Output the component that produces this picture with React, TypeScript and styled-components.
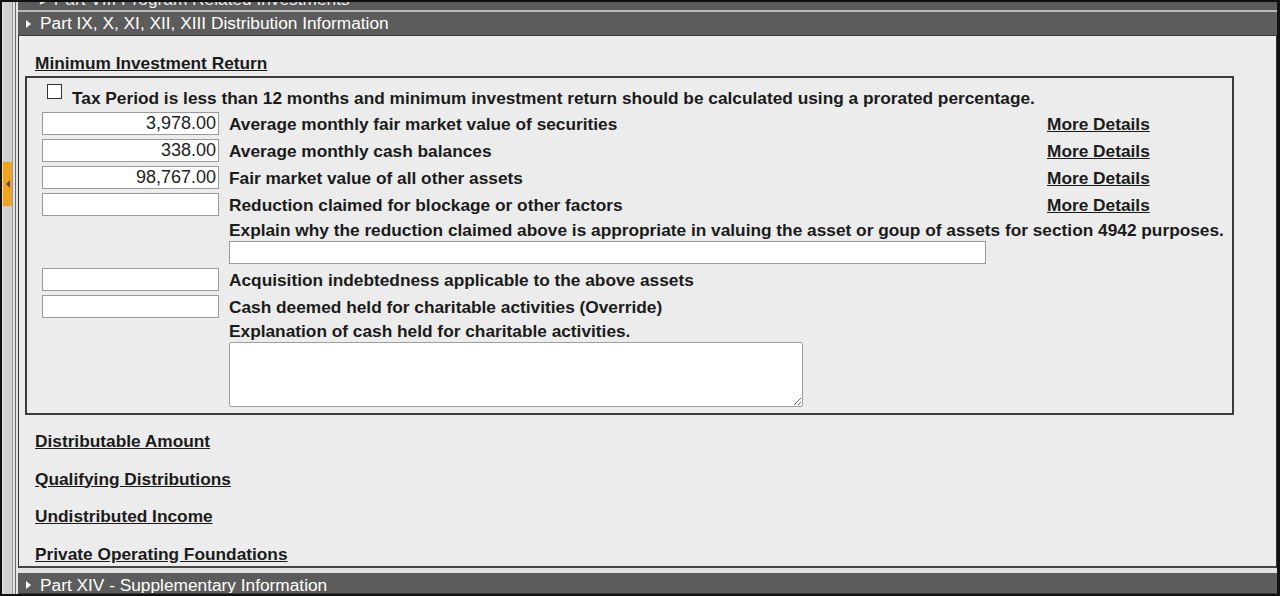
import React from "react";
import styled, { createGlobalStyle } from "styled-components";

const Global = createGlobalStyle`
  html, body { margin: 0; padding: 0; }
  body {
    width: 1280px;
    height: 596px;
    overflow: hidden;
    background: #ececec;
    font-family: "Liberation Sans", Arial, sans-serif;
  }
  * { box-sizing: border-box; }
`;

const Frame = styled.div`
  width: 1280px;
  height: 596px;
  border: 2px solid #111;
  border-right-width: 3px;
  display: flex;
  background: #ececec;
  overflow: hidden;
`;

/* Splitter gutter on the left edge */
const Gutter = styled.div`
  width: 16px;
  flex: none;
  display: flex;
  flex-direction: column;
  background: linear-gradient(
    to right,
    #dcdcdc 0 2px,
    #cfcfcf 2px 10px,
    #9a9a9a 10px 11px,
    #e2e2e2 11px 13px,
    #6a6a6a 13px 14px,
    #e4e4e4 14px 16px
  );
  padding-top: 160px;
`;

const Handle = styled.div`
  width: 9px;
  height: 44px;
  margin-left: 1px;
  background: #f2a31d;
  display: flex;
  align-items: center;
  justify-content: center;
  &::before {
    content: "";
    border-top: 4px solid transparent;
    border-bottom: 4px solid transparent;
    border-right: 4px solid #555;
  }
`;

const Main = styled.div`
  flex: 1;
  display: flex;
  flex-direction: column;
  min-width: 0;
`;

const CutBar = styled.div`
  height: 8px;
  flex: none;
  background: #5b5b5b;
  overflow: hidden;
  color: #eee;
  font-size: 17.3px;
  line-height: 20px;
  padding-left: 22px;
  white-space: nowrap;
  & > span { display: block; margin-top: -13px; }
`;

const Rule = styled.div<{ $tone: string; $h: number }>`
  height: ${(p) => p.$h}px;
  background: ${(p) => p.$tone};
  flex: none;
`;

const SectionBar = styled.div<{ $h: number; $shift?: number }>`
  height: ${(p) => p.$h}px;
  flex: none;
  background: #5c5c5c;
  border-bottom: 1px solid #3a3a3a;
  color: #fff;
  font-size: 17.3px;
  display: flex;
  align-items: center;
  gap: 9px;
  padding-left: 8px;
  padding-top: ${(p) => p.$shift ?? 0}px;
  white-space: nowrap;
  overflow: hidden;
`;

const Caret = styled.span`
  width: 0;
  height: 0;
  border-top: 4px solid transparent;
  border-bottom: 4px solid transparent;
  border-left: 5px solid #fff;
  flex: none;
`;

const Panel = styled.div`
  flex: 1;
  background: #ececec;
  border-left: 1px solid #333;
  border-right: 1px solid #333;
  border-bottom: 2px solid #444;
  padding: 17px 42px 0 6px;
  display: flex;
  flex-direction: column;
  color: #1b1b1b;
  font-size: 17.3px;
  min-height: 0;
  overflow: hidden;
`;

const Heading = styled.a`
  font-weight: bold;
  text-decoration: underline;
  color: #1b1b1b;
  margin-left: 10px;
  line-height: 20px;
  align-self: flex-start;
  cursor: pointer;
`;

const Box = styled.div`
  margin-top: 3px;
  border: 2px solid #3c3c3c;
  padding: 6px 0 6px 15px;
  display: grid;
  grid-template-columns: 177px 818px auto;
  column-gap: 10px;
  align-items: center;
`;

const CheckRow = styled.label`
  grid-column: 1 / -1;
  display: flex;
  align-items: flex-start;
  gap: 10px;
  font-weight: bold;
  padding-left: 5px;
  margin-bottom: 2px;
`;

const Check = styled.input`
  appearance: none;
  width: 15px;
  height: 15px;
  margin: 0;
  border: 1px solid #333;
  background: #fff;
  flex: none;
`;

const CheckText = styled.span`
  margin-top: 4px;
  line-height: 20px;
  white-space: nowrap;
`;

const Amount = styled.input`
  width: 177px;
  height: 23px;
  margin: 2px 0;
  border: 1px solid #9a9a9a;
  background: #fff;
  font: 18px "Liberation Sans", Arial, sans-serif;
  color: #222;
  text-align: right;
  padding: 0 2px;
  outline: none;
`;

const Label = styled.span<{ $span?: boolean }>`
  font-weight: bold;
  line-height: 20px;
  white-space: nowrap;
  grid-column: ${(p) => (p.$span ? "2 / -1" : "auto")};
`;

const Detail = styled.a`
  font-weight: bold;
  text-decoration: underline;
  color: #1b1b1b;
  margin-left: -10px;
  cursor: pointer;
  line-height: 20px;
`;

const Note = styled.span<{ $gap: number }>`
  grid-column: 2 / -1;
  font-weight: bold;
  line-height: 20px;
  margin-top: ${(p) => p.$gap}px;
  white-space: nowrap;
`;

const Wide = styled.input`
  grid-column: 2 / -1;
  width: 757px;
  height: 23px;
  margin: 1px 0 2px;
  border: 1px solid #9a9a9a;
  background: #fff;
  outline: none;
`;

const Memo = styled.textarea`
  grid-column: 2 / -1;
  display: block;
  width: 574px;
  height: 65px;
  margin: 1px 0 0;
  border: 1px solid #a0a0a0;
  border-radius: 2px;
  background: #fff;
  resize: both;
  outline: none;
`;

const Links = styled.div`
  display: flex;
  flex-direction: column;
  gap: 17.5px;
  margin-top: 16px;
`;

const rows = [
  { value: "3,978.00", label: "Average monthly fair market value of securities" },
  { value: "338.00", label: "Average monthly cash balances" },
  { value: "98,767.00", label: "Fair market value of all other assets" },
  { value: "", label: "Reduction claimed for blockage or other factors" },
];

const laterRows = [
  "Acquisition indebtedness applicable to the above assets",
  "Cash deemed held for charitable activities (Override)",
];

const sections = [
  "Distributable Amount",
  "Qualifying Distributions",
  "Undistributed Income",
  "Private Operating Foundations",
];

export default function App() {
  return (
    <>
      <Global />
      <Frame>
        <Gutter>
          <Handle />
        </Gutter>
        <Main>
          <CutBar>
            <span>▸ Part VIII Program Related Investments</span>
          </CutBar>
          <Rule $tone="#b9b9b9" $h={2} />
          <SectionBar $h={24}>
            <Caret />
            Part IX, X, XI, XII, XIII Distribution Information
          </SectionBar>
          <Panel>
            <Heading>Minimum Investment Return</Heading>
            <Box>
              <CheckRow>
                <Check type="checkbox" />
                <CheckText>
                  Tax Period is less than 12 months and minimum investment return should be
                  calculated using a prorated percentage.
                </CheckText>
              </CheckRow>
              {rows.map((r) => (
                <React.Fragment key={r.label}>
                  <Amount readOnly value={r.value} />
                  <Label>{r.label}</Label>
                  <Detail>More Details</Detail>
                </React.Fragment>
              ))}
              <Note $gap={2}>
                Explain why the reduction claimed above is appropriate in valuing the asset or goup of
                assets for section 4942 purposes.
              </Note>
              <Wide readOnly />
              {laterRows.map((l) => (
                <React.Fragment key={l}>
                  <Amount readOnly value="" />
                  <Label $span>{l}</Label>
                </React.Fragment>
              ))}
              <Note $gap={1}>Explanation of cash held for charitable activities.</Note>
              <Memo readOnly />
            </Box>
            <Links>
              {sections.map((s) => (
                <Heading key={s}>{s}</Heading>
              ))}
            </Links>
          </Panel>
          <Rule $tone="#e2e2e2" $h={5} />
          <SectionBar $h={21} $shift={4}>
            <Caret />
            Part XIV - Supplementary Information
          </SectionBar>
        </Main>
      </Frame>
    </>
  );
}
